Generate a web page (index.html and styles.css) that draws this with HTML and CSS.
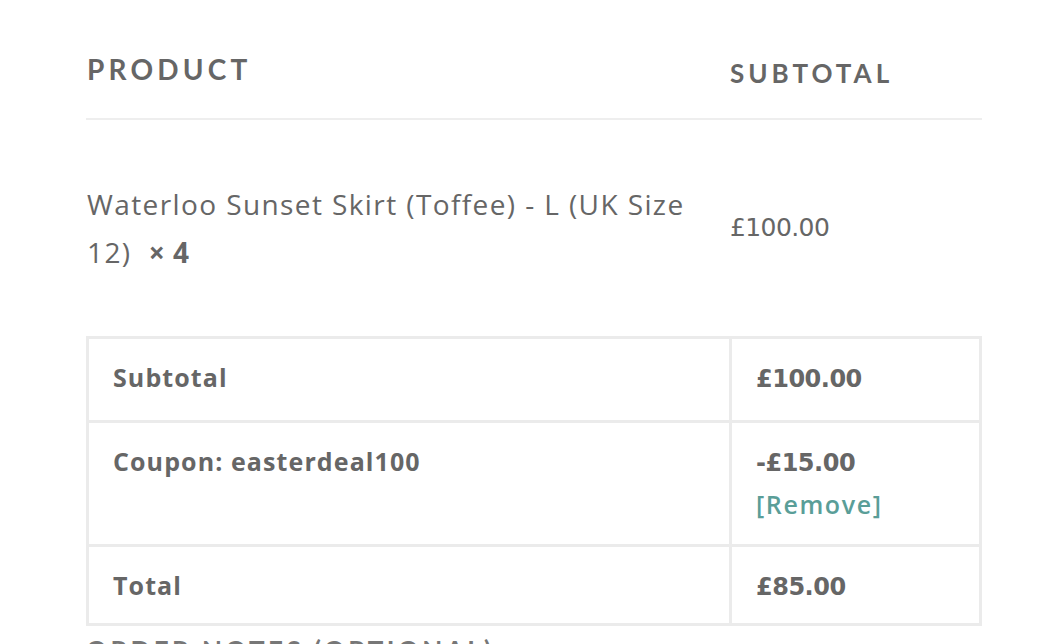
FILE: index.html
```html
<!DOCTYPE html>
<html lang="en">
<head>
<meta charset="utf-8">
<title>Order review</title>
<link rel="stylesheet" href="styles.css">
</head>
<body>
<div class="review">
  <div class="head">
    <div class="th-product">PRODUCT</div>
    <div class="th-subtotal">SUBTOTAL</div>
  </div>
  <div class="item">
    <div class="item-name">Waterloo Sunset Skirt (Toffee) - L (UK Size <span class="nw">12)&nbsp; <strong class="qty">× 4</strong></span></div>
    <div class="item-price">£100.00</div>
  </div>
  <table class="totals">
    <tr class="row-sub">
      <th>Subtotal</th>
      <td>£100.00</td>
    </tr>
    <tr class="row-coupon">
      <th>Coupon: easterdeal100</th>
      <td>-£15.00<br><a class="remove" href="#">[Remove]</a></td>
    </tr>
    <tr class="row-total">
      <th>Total</th>
      <td>£85.00</td>
    </tr>
  </table>
  <h3 class="notes">ORDER NOTES (OPTIONAL)</h3>
</div>
</body>
</html>
```
FILE: styles.css
```css
html, body {
  margin: 0;
  padding: 0;
  background: #ffffff;
  overflow: hidden;
}
body {
  color: #666666;
  font-family: "Open Sans", "Liberation Sans", sans-serif;
}
.review {
  width: 896px;
  margin-left: 86px;
  padding-top: 52px;
}
.head {
  display: grid;
  grid-template-columns: 644px 1fr;
  align-items: end;
  padding-bottom: 32px;
  border-bottom: 2px solid #eeeeee;
}
.th-product {
  font-family: "Lato", sans-serif;
  font-size: 28px;
  font-weight: 700;
  letter-spacing: 4.2px;
  padding-left: 1px;
  line-height: 34px;
}
.th-subtotal {
  font-family: "Lato", sans-serif;
  font-size: 26px;
  font-weight: 700;
  letter-spacing: 4px;
  line-height: 30px;
  margin-bottom: -2px;
}
.item {
  display: grid;
  grid-template-columns: 644px 1fr;
  align-items: center;
  padding: 60px 0 60px;
}
.item-name {
  font-size: 28px;
  line-height: 48px;
  padding-left: 1px;
  padding-right: 24px;
  letter-spacing: 1.4px;
}
.nw {
  white-space: nowrap;
}
.qty {
  font-weight: 700;
  letter-spacing: 0.5px;
}
.item-price {
  font-family: "DejaVu Sans", sans-serif;
  font-size: 25px;
  letter-spacing: -0.6px;
  margin-top: -2px;
}
.totals {
  width: 896px;
  border-collapse: collapse;
  border: 3px solid #ebebeb;
}
.totals th, .totals td {
  border: 3px solid #ebebeb;
  text-align: left;
  vertical-align: top;
  padding: 20px 24px;
  line-height: 41px;
}
.totals th {
  width: 592px;
  font-size: 25px;
  font-weight: 700;
  letter-spacing: 1.1px;
  padding-top: 18px;
  padding-bottom: 22px;
}
.totals td {
  font-family: "DejaVu Sans", sans-serif;
  font-size: 24px;
  font-weight: 700;
  letter-spacing: -0.5px;
}
.row-coupon td {
  padding-bottom: 17px;
}
.row-coupon th {
  padding-bottom: 19px;
}
.row-total td {
  padding-bottom: 15px;
}
.row-total th {
  padding-bottom: 17px;
}
.remove {
  color: #5a9e98;
  text-decoration: none;
  font-family: "Open Sans", sans-serif;
  font-size: 25px;
  font-weight: 600;
  letter-spacing: 1.6px;
}
.notes {
  margin: 7px 0 0;
  font-family: "Lato", sans-serif;
  font-size: 26px;
  font-weight: 700;
  letter-spacing: 3.4px;
  line-height: 34px;
  color: #777777;
}
```
